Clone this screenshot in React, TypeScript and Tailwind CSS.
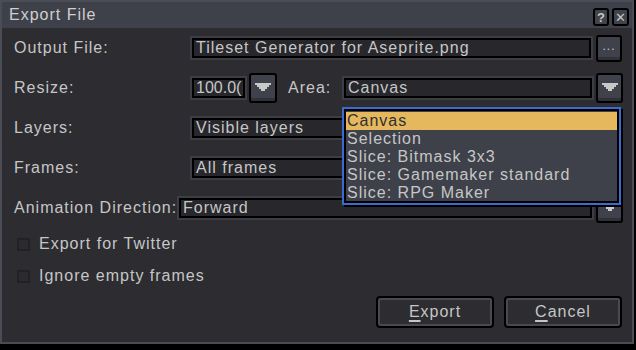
import React from 'react';

const font = { fontFamily: '"Liberation Sans", Arial, sans-serif' };

const Field: React.FC<{ w: string; children?: React.ReactNode }> = ({ w, children }) => (
  <div className={`${w} h-[24px] p-[2px] bg-[#3c3d45] shrink-0`}>
    <div className="h-full border-2 border-black bg-[#27272c] flex items-center pl-[2px] overflow-hidden whitespace-nowrap">
      {children}
    </div>
  </div>
);

const Arrow = () => (
  <svg width="16" height="8" viewBox="0 0 16 8" shapeRendering="crispEdges">
    <path d="M0 0h16v2h-2v2h-2v2h-2v2h-4v-2h-2v-2h-2v-2h-2z" fill="#c8c8c8" />
  </svg>
);

const DropButton: React.FC<{ w?: string }> = ({ w = 'w-[27px]' }) => (
  <div
    className={`${w} h-[30px] ml-[2px] shrink-0 border-2 border-black rounded-[3px] bg-[#3f424b] shadow-[inset_0_-3px_0_#30323a] flex items-center justify-center pb-[2px]`}
  >
    <Arrow />
  </div>
);

const Label: React.FC<{ w: string; children: React.ReactNode }> = ({ w, children }) => (
  <div className={`${w} shrink-0 whitespace-nowrap`}>{children}</div>
);

const Check: React.FC<{ label: string }> = ({ label }) => (
  <div className="h-[32px] flex items-center">
    <div className="ml-[3px] w-[13px] h-[13px] border-2 border-[#222226] bg-[#2a2a2f] rounded-[1px]" />
    <span className="ml-[9px]">{label}</span>
  </div>
);

const BigButton: React.FC<{ first: string; rest: string }> = ({ first, rest }) => (
  <div className="w-[118px] h-[32px] border-2 border-black rounded-[4px] bg-[#2c2c31] shadow-[inset_0_0_0_2px_#474a53] flex items-center justify-center">
    <span>
      <span className="underline underline-offset-[3px] decoration-2">{first}</span>
      {rest}
    </span>
  </div>
);

const items = ['Canvas', 'Selection', 'Slice: Bitmask 3x3', 'Slice: Gamemaker standard', 'Slice: RPG Maker'];

export default function App() {
  return (
    <div className="w-[636px] h-[350px] bg-black overflow-hidden" style={font}>
      <div className="relative w-[634px] h-[344px] border-2 border-[#4a4d56] bg-[#2c2c31] text-[16px] tracking-[1px] text-[#c6c6c6] flex flex-col">
        {/* title bar */}
        <div className="h-[26px] shrink-0 bg-[#3e414a] flex items-center pl-[7px] pr-[3px]">
          <span className="flex-1 text-[#cfcfcf]">Export File</span>
          <div className="flex gap-[3px] mt-[4px]">
            <div className="w-[16px] h-[18px] border-2 border-black rounded-[3px] bg-[#40434c] text-[13px] leading-none flex items-center justify-center font-bold tracking-normal">?</div>
            <div className="w-[17px] h-[18px] border-2 border-black rounded-[3px] bg-[#40434c] text-[13px] leading-none flex items-center justify-center tracking-normal">✕</div>
          </div>
        </div>

        {/* body */}
        <div className="flex-1 flex flex-col pl-[12px] pr-[10px]">
          <div className="h-[40px] flex items-center">
            <Label w="w-[176px]">Output File:</Label>
            <Field w="w-[403px]">Tileset Generator for Aseprite.png</Field>
            <div className="ml-[3px] w-[26px] h-[27px] border-2 border-black rounded-[3px] bg-[#3f424b] shadow-[inset_0_-3px_0_#30323a] flex items-center justify-center text-[12px] leading-none pb-[4px] tracking-[1px]">
              ...
            </div>
          </div>

          <div className="h-[40px] flex items-center">
            <Label w="w-[176px]">Resize:</Label>
            <Field w="w-[57px]">
              <span className="tracking-[0px]">100.0(</span>
            </Field>
            <DropButton w="w-[28px]" />
            <Label w="w-[54px] ml-[11px]">Area:</Label>
            <Field w="w-[252px]">Canvas</Field>
            <DropButton />
          </div>

          <div className="h-[40px] flex items-center">
            <Label w="w-[176px]">Layers:</Label>
            <Field w="w-[404px]">Visible layers</Field>
            <DropButton />
          </div>

          <div className="h-[40px] flex items-center">
            <Label w="w-[176px]">Frames:</Label>
            <Field w="w-[404px]">All frames</Field>
            <DropButton />
          </div>

          <div className="h-[40px] flex items-center">
            <Label w="w-[163px]">Animation Direction:</Label>
            <Field w="w-[417px]">Forward</Field>
            <DropButton />
          </div>

          <Check label="Export for Twitter" />
          <Check label="Ignore empty frames" />

          <div className="mt-[4px] flex justify-end gap-[10px]">
            <BigButton first="E" rest="xport" />
            <BigButton first="C" rest="ancel" />
          </div>
        </div>

        {/* combo popup */}
        <div className="absolute left-[340px] top-[105px] w-[279px] h-[98px] border-2 border-[#3a6bd0] shadow-[2px_2px_0_#000]">
          <div className="h-full border-2 border-black bg-[#3e414a] flex flex-col">
            {items.map((it, i) => (
              <div
                key={it}
                className={`h-[18px] shrink-0 flex items-center pl-[1px] whitespace-nowrap ${
                  i === 0 ? 'bg-[#e5b85e] text-[#2f2f33] mt-[1px]' : ''
                }`}
              >
                {it}
              </div>
            ))}
          </div>
        </div>
      </div>
    </div>
  );
}
